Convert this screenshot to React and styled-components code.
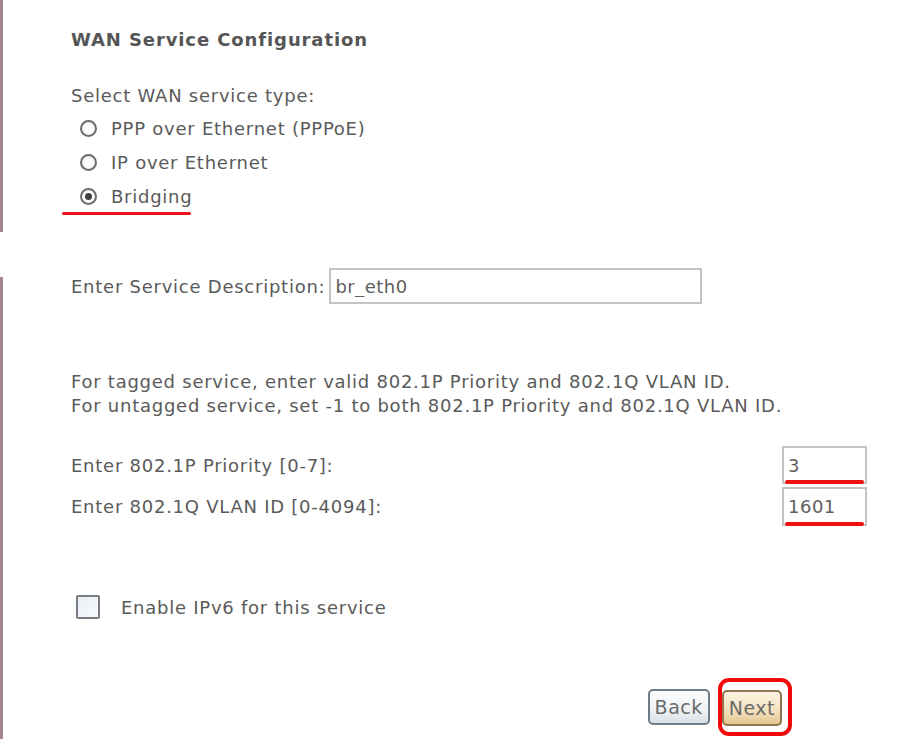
import React, { useState } from 'react';
import styled, { createGlobalStyle } from 'styled-components';

const GlobalStyle = createGlobalStyle`
  html, body {
    margin: 0;
    padding: 0;
    background: #ffffff;
  }
  body {
    font-family: 'DejaVu Sans', Verdana, sans-serif;
    color: #5a5a5a;
    letter-spacing: 0.75px;
  }
`;

const Page = styled.div`
  width: 900px;
  height: 739px;
  overflow: hidden;
  background: #fff;
`;

const Section = styled.div`
  position: relative;
  box-sizing: border-box;
  height: ${(props) => props.height}px;
  margin-top: ${(props) => props.offset || 0}px;
  padding: ${(props) => props.pad || 0}px 0 0 71px;
  &::before {
    content: '';
    position: absolute;
    left: 0;
    top: ${(props) => props.railTop || 0}px;
    bottom: 0;
    width: 3px;
    background: #a48692;
  }
`;

const Heading = styled.h1`
  margin: 0;
  font-size: 18px;
  line-height: 24px;
  font-weight: bold;
  letter-spacing: 0.9px;
  color: #555;
`;

const Prompt = styled.p`
  margin: 32px 0 3px;
  font-size: 18px;
  line-height: 24px;
`;

const OptionList = styled.div`
  display: flex;
  flex-direction: column;
`;

const Option = styled.label`
  position: relative;
  display: flex;
  align-items: center;
  gap: 14px;
  height: 34px;
  padding-left: 9px;
  font-size: 18px;
  width: max-content;
  ${(props) =>
    props.marked &&
    `
    &::after {
      content: '';
      position: absolute;
      left: -9px;
      right: 1px;
      bottom: -2px;
      height: 3px;
      border-radius: 2px;
      background: #e8141c;
    }
  `}
`;

const RadioDot = styled.span`
  box-sizing: border-box;
  width: 17px;
  height: 17px;
  border-radius: 50%;
  border: 2px solid #6d6d6d;
  background: radial-gradient(circle, #ffffff 40%, #e6e6e6 100%);
  display: flex;
  align-items: center;
  justify-content: center;
  &::after {
    content: '';
    width: 7px;
    height: 7px;
    border-radius: 50%;
    background: ${(props) => (props.checked ? '#3f3f3f' : 'transparent')};
  }
`;

const Row = styled.div`
  display: flex;
  align-items: center;
  justify-content: ${(props) => props.justify || 'flex-start'};
  gap: ${(props) => props.gap || 0}px;
  width: ${(props) => (props.full ? '796px' : 'auto')};
  height: ${(props) => (props.h ? `${props.h}px` : 'auto')};
  margin-top: ${(props) => props.mt || 0}px;
  font-size: 18px;
`;

const TextBox = styled.input`
  box-sizing: border-box;
  width: ${(props) => props.w}px;
  height: ${(props) => props.h || 36}px;
  border: 2px solid #c4c4c4;
  padding: 0 4px;
  font-family: 'DejaVu Sans', Verdana, sans-serif;
  font-size: 18px;
  letter-spacing: 0.5px;
  color: #5e5e5e;
  background: #fff;
  outline: none;
`;

const Marked = styled.span`
  position: relative;
  display: inline-flex;
  &::after {
    content: '';
    position: absolute;
    left: 3px;
    right: 3px;
    bottom: 0;
    height: 4px;
    border-radius: 2px;
    background: #f01010;
  }
`;

const Note = styled.p`
  margin: 66px 0 0;
  font-size: 18px;
  line-height: 24px;
`;

const CheckBox = styled.span`
  box-sizing: border-box;
  width: 24px;
  height: 24px;
  border: 2px solid #777c82;
  border-radius: 2px;
  background: linear-gradient(135deg, #e9eef4 0%, #f7f9fb 100%);
  margin-left: 5px;
`;

const ButtonBar = styled.div`
  display: flex;
  justify-content: flex-end;
  align-items: center;
  gap: 8px;
  width: 721px;
  margin-top: 59px;
`;

const Button = styled.button`
  box-sizing: border-box;
  height: 36px;
  padding: 0 5px;
  border-radius: 5px;
  font-family: 'DejaVu Sans', Verdana, sans-serif;
  font-size: 19px;
  letter-spacing: 0.5px;
  color: #6a6a6a;
  border: 2px solid ${(props) => (props.primary ? '#8f7650' : '#6f7d8a')};
  background: ${(props) =>
    props.primary
      ? 'linear-gradient(#fbf3e2, #f3e1bd 60%, #e4c58c)'
      : 'linear-gradient(#fbfcfd, #eef2f5 60%, #d9e0e6)'};
`;

const Circled = styled.span`
  display: inline-flex;
  padding: 8px 6px 6px 0;
  border: 4px solid #f00a0a;
  border-radius: 11px;
`;

const options = [
  { id: 'pppoe', label: 'PPP over Ethernet (PPPoE)' },
  { id: 'ipoe', label: 'IP over Ethernet' },
  { id: 'bridge', label: 'Bridging' },
];

const App = () => {
  const [type, setType] = useState('bridge');
  const [desc, setDesc] = useState('br_eth0');
  const [prio, setPrio] = useState('3');
  const [vlan, setVlan] = useState('1601');
  const [ipv6, setIpv6] = useState(false);

  return (
    <Page>
      <GlobalStyle />
      <Section height={232} pad={28}>
        <Heading>WAN Service Configuration</Heading>
        <Prompt>Select WAN service type:</Prompt>
        <OptionList>
          {options.map((o) => (
            <Option
              key={o.id}
              marked={o.id === 'bridge'}
              onClick={() => setType(o.id)}
            >
              <RadioDot checked={type === o.id} />
              {o.label}
            </Option>
          ))}
        </OptionList>
      </Section>

      <Section height={473} offset={36} pad={0} railTop={9}>
        <Row gap={4} h={36}>
          Enter Service Description:
          <TextBox w={373} value={desc} onChange={(e) => setDesc(e.target.value)} />
        </Row>
        <Note>
          For tagged service, enter valid 802.1P Priority and 802.1Q VLAN ID.
          <br />
          For untagged service, set -1 to both 802.1P Priority and 802.1Q VLAN ID.
        </Note>
        <Row full justify="space-between" h={38} mt={28}>
          Enter 802.1P Priority [0-7]:
          <Marked>
            <TextBox w={85} h={38} value={prio} onChange={(e) => setPrio(e.target.value)} />
          </Marked>
        </Row>
        <Row full justify="space-between" h={39} mt={3}>
          Enter 802.1Q VLAN ID [0-4094]:
          <Marked>
            <TextBox w={85} h={39} value={vlan} onChange={(e) => setVlan(e.target.value)} />
          </Marked>
        </Row>
        <Row gap={21} h={24} mt={69} onClick={() => setIpv6(!ipv6)}>
          <CheckBox />
          Enable IPv6 for this service
        </Row>
        <ButtonBar>
          <Button>Back</Button>
          <Circled>
            <Button primary>Next</Button>
          </Circled>
        </ButtonBar>
      </Section>
    </Page>
  );
};

export default App;
